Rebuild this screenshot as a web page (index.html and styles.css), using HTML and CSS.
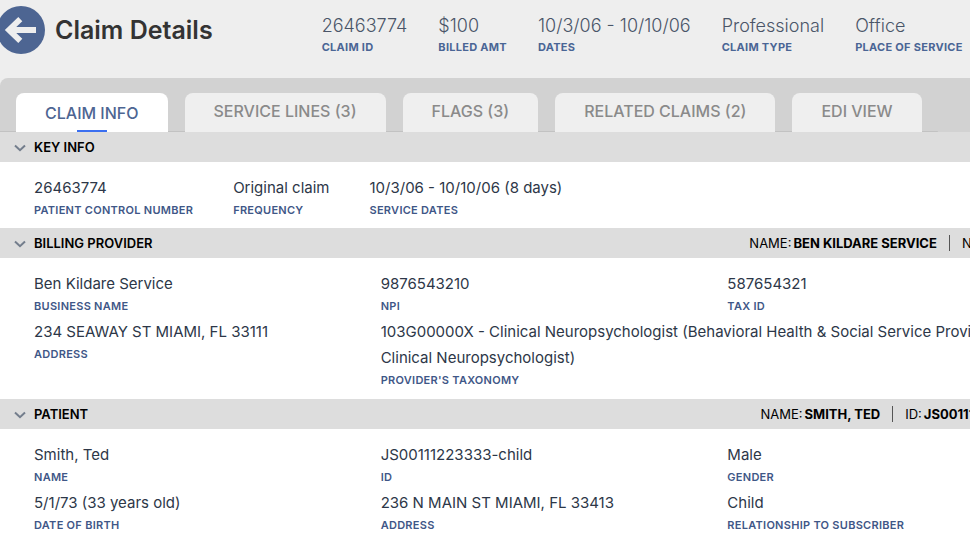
FILE: index.html
```html
<!DOCTYPE html>
<html lang="en">
<head>
<meta charset="utf-8">
<title>Claim Details</title>
<link rel="stylesheet" href="styles.css">
</head>
<body>
<header class="header">
  <button class="back" type="button" aria-label="Back">
    <svg class="back-icon" viewBox="0 0 48 48" aria-hidden="true">
      <circle cx="24" cy="24" r="24" fill="#4d6592"/>
      <path d="M39 24H12M23.3 13.2L12 24L23.3 34.8" fill="none" stroke="#eee" stroke-width="5.8"/>
    </svg>
  </button>
  <h1 class="title">Claim Details</h1>
  <dl class="facts">
    <div class="fact"><dd>26463774</dd><dt>CLAIM ID</dt></div>
    <div class="fact"><dd>$100</dd><dt>BILLED AMT</dt></div>
    <div class="fact"><dd>10/3/06 - 10/10/06</dd><dt>DATES</dt></div>
    <div class="fact"><dd>Professional</dd><dt>CLAIM TYPE</dt></div>
    <div class="fact"><dd>Office</dd><dt>PLACE OF SERVICE</dt></div>
  </dl>
</header>
<div class="tab-band">
  <nav class="tabs">
    <a class="tab active" href="#info" aria-current="page">CLAIM INFO</a>
    <a class="tab" href="#lines">SERVICE LINES (3)</a>
    <a class="tab" href="#flags">FLAGS (3)</a>
    <a class="tab" href="#related">RELATED CLAIMS (2)</a>
    <a class="tab" href="#edi">EDI VIEW</a>
  </nav>
</div>
<main class="content">
  <section>
    <div class="bar">
      <button class="toggle" type="button"><svg class="chevron" viewBox="0 0 12 8" aria-hidden="true"><path d="M1 1.5L6 6.2L11 1.5"/></svg>KEY INFO</button>
    </div>
    <dl class="fields inline">
      <div class="field"><dd>26463774</dd><dt>PATIENT CONTROL NUMBER</dt></div>
      <div class="field"><dd>Original claim</dd><dt>FREQUENCY</dt></div>
      <div class="field"><dd>10/3/06 - 10/10/06 (8 days)</dd><dt>SERVICE DATES</dt></div>
    </dl>
  </section>
  <section>
    <div class="bar">
      <button class="toggle" type="button"><svg class="chevron" viewBox="0 0 12 8" aria-hidden="true"><path d="M1 1.5L6 6.2L11 1.5"/></svg>BILLING PROVIDER</button>
      <p class="summary"><span>NAME:<b>BEN KILDARE SERVICE</b></span><span>NPI:<b>9876543210</b></span></p>
    </div>
    <dl class="fields columns">
      <div class="field"><dd>Ben Kildare Service</dd><dt>BUSINESS NAME</dt></div>
      <div class="field"><dd>9876543210</dd><dt>NPI</dt></div>
      <div class="field"><dd>587654321</dd><dt>TAX ID</dt></div>
      <div class="field"><dd>234 SEAWAY ST MIAMI, FL 33111</dd><dt>ADDRESS</dt></div>
      <div class="field wide"><dd>103G00000X - Clinical Neuropsychologist (Behavioral Health &amp; Social Service Providers,<br>Clinical Neuropsychologist)</dd><dt>PROVIDER'S TAXONOMY</dt></div>
    </dl>
  </section>
  <section>
    <div class="bar">
      <button class="toggle" type="button"><svg class="chevron" viewBox="0 0 12 8" aria-hidden="true"><path d="M1 1.5L6 6.2L11 1.5"/></svg>PATIENT</button>
      <p class="summary"><span>NAME:<b>SMITH, TED</b></span><span>ID:<b>JS00111223333-CHILD</b></span></p>
    </div>
    <dl class="fields columns">
      <div class="field"><dd>Smith, Ted</dd><dt>NAME</dt></div>
      <div class="field"><dd>JS00111223333-child</dd><dt>ID</dt></div>
      <div class="field"><dd>Male</dd><dt>GENDER</dt></div>
      <div class="field"><dd>5/1/73 (33 years old)</dd><dt>DATE OF BIRTH</dt></div>
      <div class="field"><dd>236 N MAIN ST MIAMI, FL 33413</dd><dt>ADDRESS</dt></div>
      <div class="field"><dd>Child</dd><dt>RELATIONSHIP TO SUBSCRIBER</dt></div>
    </dl>
  </section>
</main>
</body>
</html>
```
FILE: styles.css
```css
* { box-sizing: border-box; }
html, body { overflow: hidden; }
body {
  margin: 0;
  background: #eee;
  font-family: Inter, "Liberation Sans", sans-serif;
  font-size: 15px;
  color: #2d3748;
}
h1, p, dl, dd { margin: 0; }
button { padding: 0; border: 0; background: none; font: inherit; color: inherit; }

.header { display: flex; align-items: flex-start; padding: 6px 0 24px; white-space: nowrap; }
.back { flex: none; margin-left: -3px; width: 48px; height: 48px; }
.back-icon { display: block; width: 48px; height: 48px; }
.title { margin: 0 109px 0 10px; font-size: 25px; line-height: 48px; font-weight: 600; color: #333; }
.facts { display: flex; gap: 31px; padding-top: 5px; }
.fact { display: flex; flex-direction: column; }
.fact dd { font-size: 18px; line-height: 30px; font-weight: 300; color: #4a5568; }
.fact dt { font-size: 11px; line-height: 12px; font-weight: 700; letter-spacing: 0.025em; color: #4a6595; }

.tab-band { background: #d2d2d2; border-radius: 8px 0 0; padding-top: 15px; }
.tabs {
  display: flex;
  gap: 17px;
  width: fit-content;
  padding: 0 16px;
  white-space: nowrap;
  background: linear-gradient(#c2c2c2, #c2c2c2) bottom / 100% 1px no-repeat;
}
.tab {
  height: 39px;
  padding: 0 29px;
  border-radius: 8px 8px 0 0;
  background: #efefef;
  color: #8a8a8a;
  font-size: 16px;
  font-weight: 500;
  line-height: 37px;
  text-decoration: none;
}
.tab.active {
  background: linear-gradient(#3b6ff0, #3b6ff0) bottom / 30px 2px no-repeat #fff;
  color: #4d6592;
  line-height: 41px;
}

.content { min-width: 1078px; background: #fff; }
.bar { display: flex; justify-content: space-between; height: 30px; padding: 0 8px 0 14px; background: #ddd; font-size: 13px; line-height: 30px; color: #000; }
.toggle { display: flex; align-items: center; gap: 8px; font-weight: 600; }
.chevron { width: 12px; height: 8px; margin-top: 2px; fill: none; stroke: #737d8c; stroke-width: 2; }
.summary { display: flex; align-items: center; white-space: nowrap; }
.summary span + span { margin-left: 12px; padding-left: 12px; border-left: 1px solid #555; line-height: 16px; }
.summary b { margin-left: 2px; font-weight: 700; }

.fields { padding: 13px 4px 9px 34px; }
.inline { display: flex; gap: 40px; }
.columns { display: grid; grid-template-columns: repeat(3, 1fr); row-gap: 4px; padding-bottom: 10px; }
.field { display: flex; flex-direction: column; }
.wide { grid-column: span 2; }
.field dd { line-height: 26px; }
.field dt { font-size: 11px; line-height: 18px; font-weight: 600; letter-spacing: 0.025em; color: #3f5787; }
```
